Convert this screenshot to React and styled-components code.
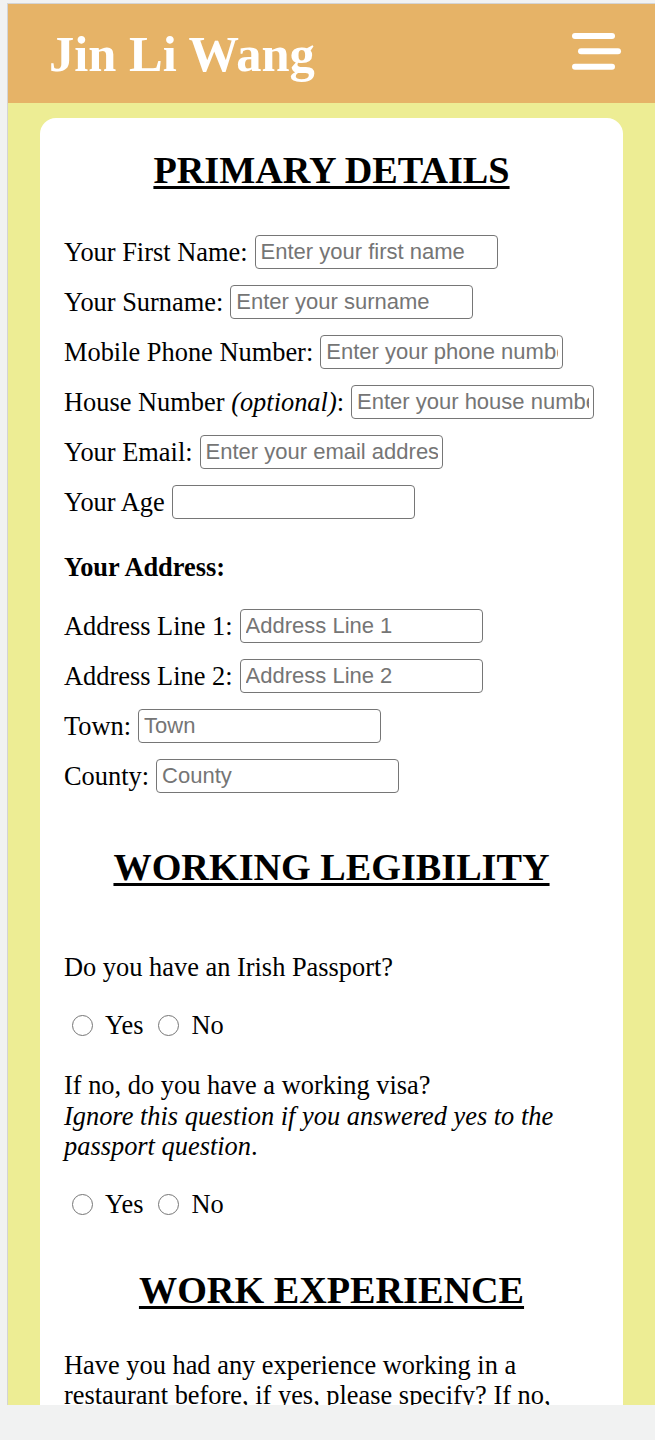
import styled, { createGlobalStyle } from 'styled-components';

const GlobalStyle = createGlobalStyle`
  html, body {
    margin: 0;
    padding: 0;
    background: #f1f2f2;
  }
`;

const primaryFields = [
  { label: 'Your First Name:', placeholder: 'Enter your first name' },
  { label: 'Your Surname:', placeholder: 'Enter your surname' },
  { label: 'Mobile Phone Number:', placeholder: 'Enter your phone number' },
  { label: 'House Number', optional: true, placeholder: 'Enter your house number' },
  { label: 'Your Email:', placeholder: 'Enter your email address' },
  { label: 'Your Age', placeholder: '' },
];

const addressFields = [
  { label: 'Address Line 1:', placeholder: 'Address Line 1' },
  { label: 'Address Line 2:', placeholder: 'Address Line 2' },
  { label: 'Town:', placeholder: 'Town' },
  { label: 'County:', placeholder: 'County' },
];

function MenuIcon() {
  return (
    <MenuButton aria-label="Menu">
      <svg width="51" height="39" viewBox="0 0 51 39">
        <g stroke="#fff" strokeWidth="6" strokeLinecap="round">
          <line x1="4" y1="4" x2="41" y2="4" />
          <line x1="10" y1="19.3" x2="47" y2="19.3" />
          <line x1="4" y1="34.7" x2="41" y2="34.7" />
        </g>
      </svg>
    </MenuButton>
  );
}

function Field({ label, optional, placeholder }) {
  return (
    <FieldRow>
      <FieldLabel>
        {label}
        {optional && (
          <>
            {' '}
            <em>(optional)</em>:
          </>
        )}
      </FieldLabel>
      <TextInput type="text" placeholder={placeholder} />
    </FieldRow>
  );
}

function YesNo({ name }) {
  return (
    <RadioRow>
      <RadioOption>
        <Radio type="radio" name={name} value="yes" />
        Yes
      </RadioOption>
      <RadioOption>
        <Radio type="radio" name={name} value="no" />
        No
      </RadioOption>
    </RadioRow>
  );
}

function App() {
  return (
    <>
      <GlobalStyle />
      <Frame>
        <Header>
          <SiteTitle>Jin Li Wang</SiteTitle>
          <MenuIcon />
        </Header>
        <Card>
          <Heading $mt={0} $mb={43}>PRIMARY DETAILS</Heading>
          {primaryFields.map((f) => (
            <Field key={f.label} {...f} />
          ))}
          <SubHeading>Your Address:</SubHeading>
          {addressFields.map((f) => (
            <Field key={f.label} {...f} />
          ))}

          <Heading $mt={52} $mb={63}>WORKING LEGIBILITY</Heading>
          <Question>Do you have an Irish Passport?</Question>
          <YesNo name="passport" />
          <Question>
            If no, do you have a working visa?
            <br />
            <em>Ignore this question if you answered yes to the passport question</em>.
          </Question>
          <YesNo name="visa" />

          <Heading $mt={48} $mb={38}>WORK EXPERIENCE</Heading>
          <Question>
            Have you had any experience working in a restaurant before, if yes,
            please specify? If no, please tell us why you would like to work
            with us.
          </Question>
          <TextArea rows={5} />
        </Card>
      </Frame>
    </>
  );
}

const Frame = styled.div`
  margin: 3px 0 0 7px;
  border-top: 1px solid #d4d4d4;
  border-left: 1px solid #d4d4d4;
  height: 1401px;
  overflow: hidden;
  background: #eded94;
  font-family: 'Liberation Serif', 'Times New Roman', serif;
  color: #000;
`;

const Header = styled.header`
  display: flex;
  align-items: center;
  justify-content: space-between;
  height: 99px;
  padding: 0 33px 0 41px;
  background: #e6b367;
`;

const SiteTitle = styled.h1`
  margin: 0;
  font-size: 50.5px;
  font-weight: bold;
  color: #fff;
`;

const MenuButton = styled.div`
  display: flex;
  margin-bottom: 4px;
`;

const Card = styled.main`
  margin: 15px 32px 0;
  padding: 30px 24px 40px;
  background: #fff;
  border-radius: 16px;
  font-size: 26.4px;
`;

const Heading = styled.h2`
  margin: ${(p) => p.$mt}px 0 ${(p) => p.$mb}px;
  font-size: 38.2px;
  font-weight: bold;
  text-align: center;
  text-decoration: underline;
  text-decoration-thickness: 2.5px;
  text-underline-offset: 3px;
`;

const FieldRow = styled.div`
  display: flex;
  align-items: center;
  gap: 7px;
  height: 34px;
  margin-bottom: 16px;
  white-space: nowrap;
`;

const FieldLabel = styled.label`
  flex: none;
`;

const TextInput = styled.input`
  flex: none;
  box-sizing: border-box;
  width: 243px;
  height: 34px;
  padding: 0 4px 0 5px;
  border: 1.6px solid #767676;
  border-radius: 4px;
  font-family: 'Liberation Sans', Arial, sans-serif;
  font-size: 22px;
  color: #000;
  background: #fff;

  &::placeholder {
    color: #757575;
  }
`;

const SubHeading = styled.h4`
  margin: 33px 0 26px;
  font-size: 26.4px;
  font-weight: bold;
`;

const Question = styled.p`
  margin: 0 0 28px;
  line-height: 30.4px;
`;

const RadioRow = styled.div`
  display: flex;
  align-items: center;
  height: 30px;
  margin-bottom: 30px;
`;

const RadioOption = styled.label`
  display: flex;
  align-items: center;
  margin-right: 7px;
`;

const Radio = styled.input`
  appearance: none;
  box-sizing: border-box;
  width: 21px;
  height: 21px;
  margin: 0 12px 0 8px;
  border: 1.5px solid #767676;
  border-radius: 50%;
  background: #fff;
`;

const TextArea = styled.textarea`
  box-sizing: border-box;
  width: 100%;
  border: 1.6px solid #767676;
  border-radius: 4px;
`;

export default App;
